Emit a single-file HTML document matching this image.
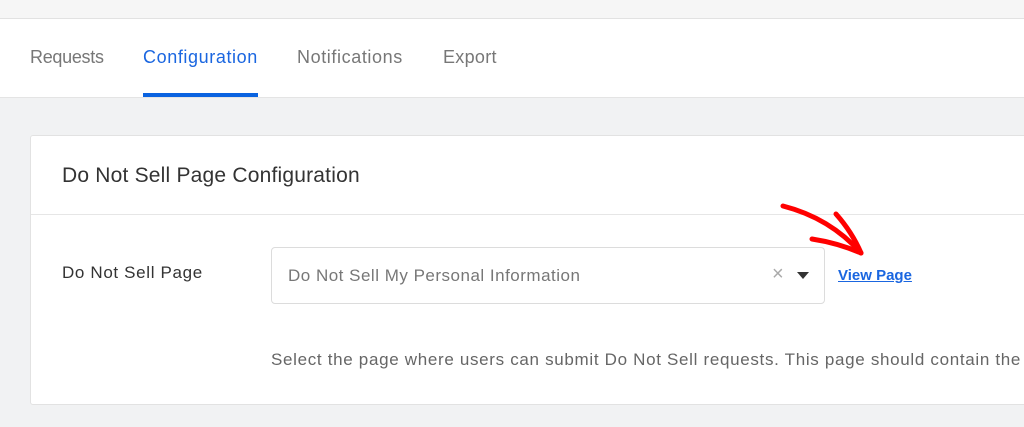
<!DOCTYPE html>
<html><head><style>
body{margin:0;width:1024px;height:427px;overflow:hidden;background:#f1f2f3;font-family:"Liberation Sans",sans-serif;position:relative}
.top{position:absolute;left:0;top:0;width:1024px;height:18px;background:#f6f6f6;border-bottom:1px solid #e2e2e2}
.hdr{position:absolute;left:0;top:19px;width:1024px;height:78px;background:#fff;border-bottom:1px solid #e4e4e4}
.tab{position:absolute;top:28px;font-size:18px;color:#777;white-space:nowrap}
.card{position:absolute;left:30px;top:135px;width:1010px;height:268px;background:#fff;border:1px solid #e2e2e2;border-radius:3px}
.ch{height:78px;border-bottom:1px solid #e6e6e6}
</style></head><body>
<div class="top"></div>
<div class="hdr">
<div class="tab" style="left:30px;letter-spacing:-0.3px">Requests</div>
<div class="tab" style="left:143px;color:#1a66e0;letter-spacing:0.6px">Configuration</div>
<div style="position:absolute;left:143px;top:74px;width:115px;height:4px;background:#0a63e0"></div>
<div class="tab" style="left:297px;letter-spacing:0.6px">Notifications</div>
<div class="tab" style="left:443px;letter-spacing:0.3px">Export</div>
</div>
<div class="card">
<div class="ch"><div style="position:absolute;left:31px;top:28px;font-size:21px;color:#333;letter-spacing:0.2px">Do Not Sell Page Configuration</div></div>
<div style="position:absolute;left:31px;top:127px;font-size:17px;color:#333;letter-spacing:0.65px">Do Not Sell Page</div>
<div style="position:absolute;left:240px;top:111px;width:552px;height:55px;border:1px solid #dcdcdc;border-radius:4px">
<div style="position:absolute;left:16px;top:18px;font-size:17px;color:#777;letter-spacing:0.5px">Do Not Sell My Personal Information</div>
<div style="position:absolute;left:500px;top:15px;font-size:20px;color:#aaa">×</div>
<div style="position:absolute;left:525px;top:24px;width:0;height:0;border-left:6px solid transparent;border-right:6px solid transparent;border-top:7px solid #333"></div>
</div>
<div style="position:absolute;left:807px;top:131px;font-size:15px;font-weight:bold;color:#1a66e0;text-decoration:underline">View Page</div>
<div style="position:absolute;left:240px;top:214px;font-size:17px;color:#666;white-space:nowrap;letter-spacing:0.68px">Select the page where users can submit Do Not Sell requests. This page should contain the</div>
</div>
<svg style="position:absolute;left:0;top:0" width="1024" height="427"><g fill="none" stroke="#f00" stroke-width="5" stroke-linecap="round"><path d="M783 206 Q830 218 861 253"/><path d="M836 214 Q852 232 861 253"/><path d="M812 239 Q838 243 861 253"/></g></svg>
</body></html>
